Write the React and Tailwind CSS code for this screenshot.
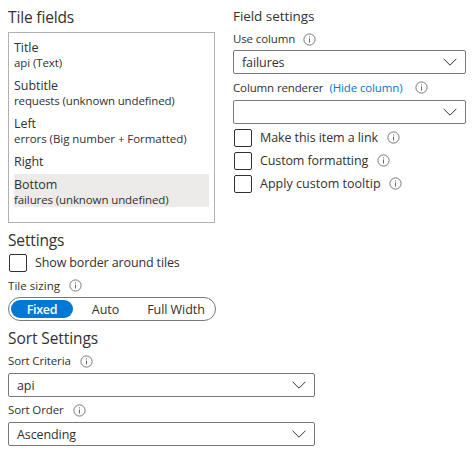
import React from "react";

function Info({ className = "" }) {
  return (
    <svg viewBox="0 0 13 13" className={`h-[13px] w-[13px] shrink-0 ${className}`} fill="none">
      <circle cx="6.5" cy="6.5" r="5.6" stroke="#6b6967" strokeWidth="0.9" />
      <path d="M6.5 5.5V9.5M6.5 3.3V4.4" stroke="#6b6967" strokeWidth="1" />
    </svg>
  );
}

function Select({ children, className = "" }) {
  return (
    <div className={`flex h-6 items-center justify-between rounded-[2px] border border-[#7a7876] pr-2 pl-2 ${className}`}>
      <span className="pt-px text-[12.5px] leading-[22px] tracking-[-0.1px]">{children}</span>
      <svg viewBox="0 0 14 8" className="h-2 w-3.5" fill="none">
        <path d="M0.6 0.8L7 7.2L13.4 0.8" stroke="#323130" strokeWidth="1" />
      </svg>
    </div>
  );
}

function Label({ children, className = "", tracking = "tracking-[-0.13px]" }) {
  return <span className={`text-[11.5px] leading-[15px] whitespace-nowrap ${tracking} ${className}`}>{children}</span>;
}

function Check({ children, tracking = "tracking-[-0.08px]", info = "" }) {
  return (
    <div className="flex h-[18px] items-center pl-px">
      <span className="h-[18px] w-[18px] shrink-0 rounded-[2px] border border-[#323130]" />
      <span className={`ml-2 text-[12.5px] leading-[18px] whitespace-nowrap ${tracking}`}>{children}</span>
      {info && <Info className={info} />}
    </div>
  );
}

function Field({ title, detail, selected, tracking = "tracking-[-0.14px]" }) {
  return (
    <div className={selected ? "bg-[#edebe9]" : ""}>
      <div className="h-[18px] text-[12.5px] leading-[21px] tracking-[-0.05px]">{title}</div>
      {detail && <div className={`h-[15px] text-[11.5px] leading-[15px] whitespace-nowrap ${tracking}`}>{detail}</div>}
    </div>
  );
}

export default function App() {
  return (
    <div className="h-[459px] w-[473px] overflow-hidden bg-white pl-2 font-['Open_Sans','Noto_Sans',sans-serif] text-[#323130]">
      <div className="flex h-[223px]">
        <div className="w-[207px] pt-1.5">
          <h2 className="h-[26px] text-[15.5px] leading-[23px] tracking-[-0.15px]">Tile fields</h2>
          <div className="flex h-[191px] flex-col gap-[5px] border border-[#b3b0ad] px-[5px] pt-1">
            <Field title="Title" detail="api (Text)" tracking="tracking-[-0.1px]" />
            <Field title="Subtitle" detail="requests (unknown undefined)" />
            <Field title="Left" detail="errors (Big number + Formatted)" tracking="tracking-[-0.05px]" />
            <Field title="Right" />
            <Field title="Bottom" detail="failures (unknown undefined)" selected tracking="tracking-[-0.11px]" />
          </div>
        </div>
        <div className="ml-[18px] w-[233px] pt-1.5">
          <h3 className="h-[25px] text-[13.5px] leading-5 tracking-[-0.06px]">Field settings</h3>
          <div className="flex h-[19px] items-start">
            <Label>Use column</Label>
            <Info className="mt-[1.5px] ml-2" />
          </div>
          <Select>failures</Select>
          <div className="mt-1.5 flex h-5 items-start">
            <Label>Column renderer</Label>
            <Label className="ml-1.5 text-[#0078d4]">(Hide column)</Label>
            <Info className="mt-px ml-[13px]" />
          </div>
          <Select />
          <div className="mt-[5px] flex flex-col gap-[5px]">
            <Check info="mb-0.5 ml-[9px]">Make this item a link</Check>
            <Check info="mb-0.5 ml-[9px]" tracking="tracking-[-0.12px]">Custom formatting</Check>
            <Check info="mb-0.5 ml-2" tracking="tracking-[0.02px]">Apply custom tooltip</Check>
          </div>
        </div>
      </div>
      <h2 className="mt-1.5 h-[25px] text-[15.5px] leading-[23px] tracking-[-0.15px]">Settings</h2>
      <Check tracking="tracking-[-0.13px]">Show border around tiles</Check>
      <div className="mt-1.5 flex h-[19px] items-start">
        <Label tracking="tracking-[0.05px]">Tile sizing</Label>
        <Info className="mt-px ml-[9px]" />
      </div>
      <div className="flex h-6 w-52 items-center rounded-full border border-[#7a7876] pl-0.5 text-[12.5px] leading-[19px] tracking-[-0.05px]">
        <span className="h-[18px] w-[62px] rounded-full bg-[#0078d4] text-center font-semibold tracking-[-0.3px] text-white">Fixed</span>
        <span className="h-[18px] w-[65px] text-center">Auto</span>
        <span className="h-[18px] w-[76px] text-center whitespace-nowrap">Full Width</span>
      </div>
      <h2 className="mt-1.5 h-[26px] text-[15.5px] leading-[23px] tracking-[-0.08px]">Sort Settings</h2>
      <div className="flex h-5 items-start">
        <Label>Sort Criteria</Label>
        <Info className="mt-[1.5px] ml-[9px]" />
      </div>
      <Select className="w-[307px]">api</Select>
      <div className="mt-[5px] flex h-5 items-start">
        <Label>Sort Order</Label>
        <Info className="mt-[1.5px] ml-[9px]" />
      </div>
      <Select className="w-[307px]">Ascending</Select>
    </div>
  );
}
